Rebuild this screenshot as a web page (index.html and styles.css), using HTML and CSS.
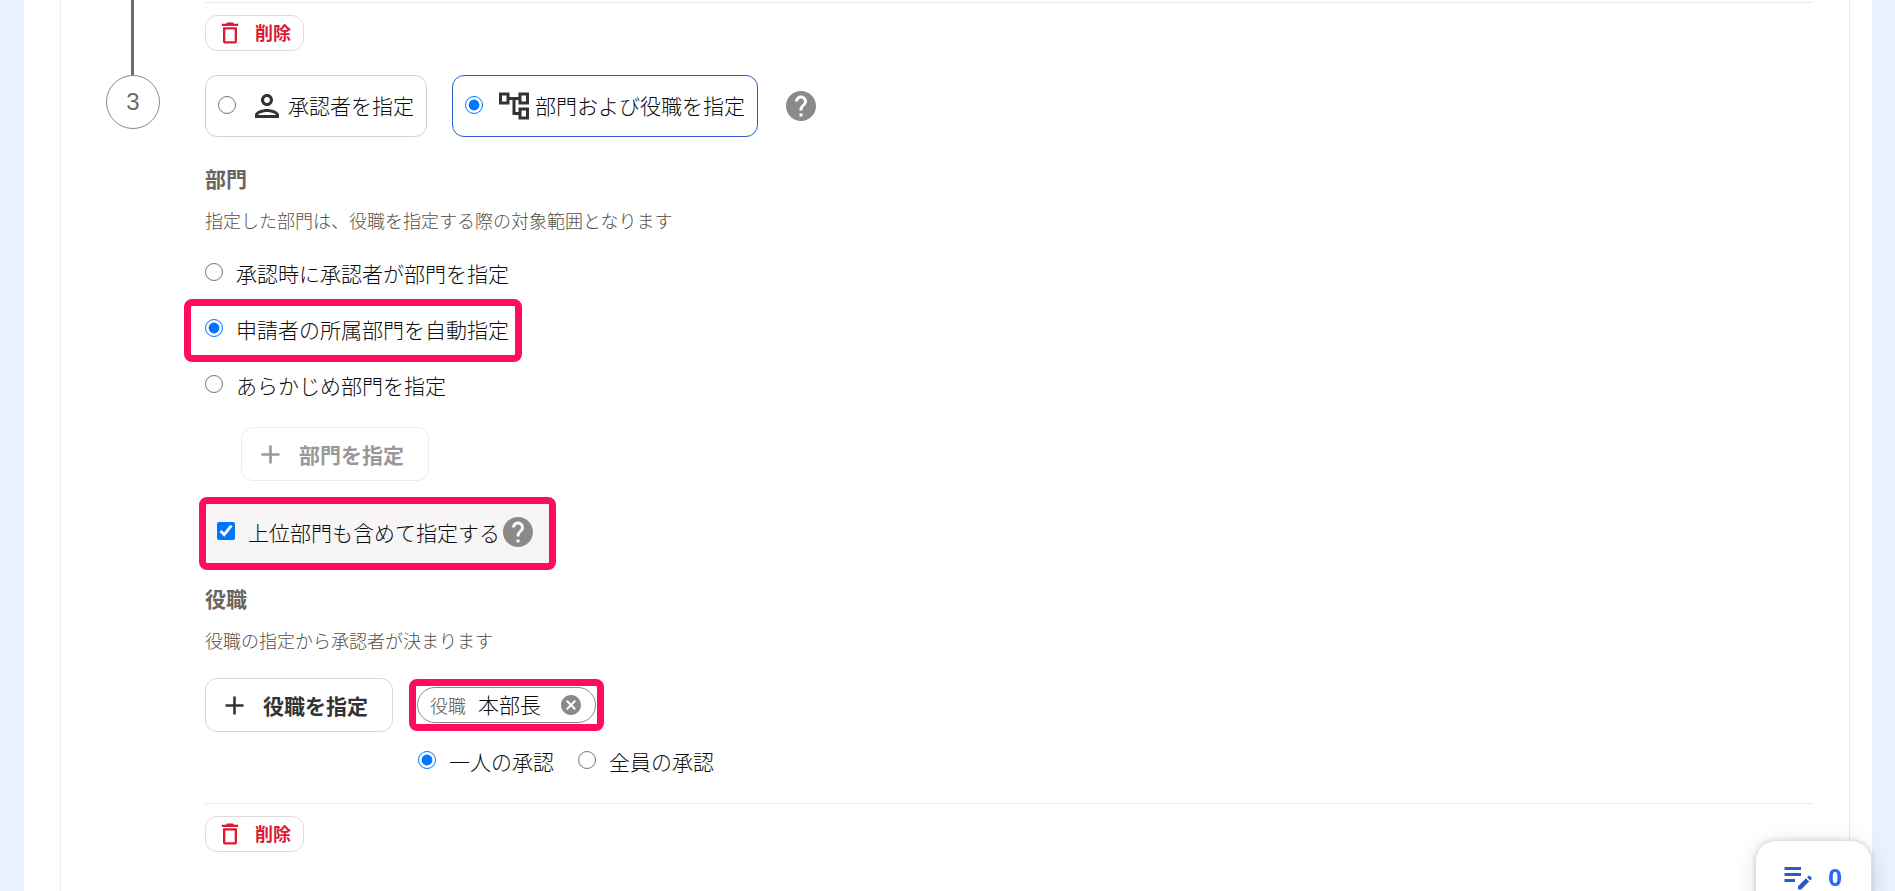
FILE: index.html
```
<!DOCTYPE html>
<html lang="ja">
<head>
    <meta charset="UTF-8">
    <title>承認経路の設定</title>
    <link rel="stylesheet" href="styles.css">
</head>
<body>
    <!-- Shared icons -->
    <svg class="icon-defs" aria-hidden="true">
        <symbol id="icon-trash" viewBox="0 0 24 24">
            <path d="M6 19c0 1.100.9 2 2 2h8c1.100 0 2-.9 2-2V7H6v12zM8 9h8v10H8V9zm7.500-5l-1-1h-5l-1 1H5v2h14V4z"/>
        </symbol>
        <symbol id="icon-person" viewBox="0 0 24 24">
            <path d="M12 6c1.100 0 2 .9 2 2s-.9 2-2 2-2-.9-2-2 .9-2 2-2m0 10c2.700 0 5.800 1.290 6 2H6c.23-.72 3.310-2 6-2m0-12C9.790 4 8 5.790 8 8s1.790 4 4 4 4-1.790 4-4-1.790-4-4-4zm0 10c-2.670 0-8 1.340-8 4v2h16v-2c0-2.660-5.330-4-8-4z"/>
        </symbol>
        <symbol id="icon-tree" viewBox="0 0 24 24">
            <path d="M22 11V3h-7v3H9V3H2v8h7V8h2v10h4v3h7v-8h-7v3h-2V8h2v3h7zM7 9H4V5h3v4zm10 6h3v4h-3v-4zm0-10h3v4h-3V5z"/>
        </symbol>
        <symbol id="icon-help" viewBox="0 0 24 24">
            <path d="M12 2C6.480 2 2 6.480 2 12s4.480 10 10 10 10-4.480 10-10S17.520 2 12 2zm1 17h-2v-2h2v2zm2.070-7.750l-.9.920C13.450 12.900 13 13.500 13 15h-2v-.5c0-1.100.45-2.100 1.170-2.830l1.240-1.260c.37-.36.59-.86.59-1.410 0-1.100-.9-2-2-2s-2 .9-2 2H8c0-2.210 1.790-4 4-4s4 1.790 4 4c0 .88-.36 1.680-.93 2.250z"/>
        </symbol>
        <symbol id="icon-plus" viewBox="0 0 24 24">
            <path d="M19 13h-6v6h-2v-6H5v-2h6V5h2v6h6v2z"/>
        </symbol>
        <symbol id="icon-cancel" viewBox="0 0 24 24">
            <path d="M12 2C6.470 2 2 6.470 2 12s4.470 10 10 10 10-4.470 10-10S17.530 2 12 2zm5 13.590L15.590 17 12 13.410 8.410 17 7 15.590 10.590 12 7 8.410 8.410 7 12 10.590 15.590 7 17 8.410 13.410 12 17 15.590z"/>
        </symbol>
        <symbol id="icon-edit-note" viewBox="0 0 24 24">
            <path d="M3 10h11v2H3v-2zm0-2h11V6H3v2zm0 8h7v-2H3v2zm15.010-3.130l.71-.71c.39-.39 1.020-.39 1.410 0l.71.710c.39.39.39 1.020 0 1.410l-.71.710-2.120-2.120zm-.71.710l-5.300 5.300V21h2.120l5.300-5.300-2.120-2.120z"/>
        </symbol>
    </svg>

    <main class="page">
        <ol class="steps">
            <li class="step step-previous">
                <div class="rail">
                    <span class="rail-line"></span>
                </div>
                <div class="step-body">
                    <div class="step-footer">
                        <button type="button" class="btn-delete"><svg class="icon-delete"><use href="#icon-trash"/></svg>削除</button>
                    </div>
                </div>
            </li>

            <li class="step">
                <div class="rail">
                    <span class="step-number">3</span>
                </div>
                <div class="step-body">
                    <!-- How the approver is chosen -->
                    <div class="method-row">
                        <label class="method-card">
                            <input type="radio" name="method">
                            <svg class="icon-large"><use href="#icon-person"/></svg>
                            <span>承認者を指定</span>
                        </label>
                        <label class="method-card selected">
                            <input type="radio" name="method" checked>
                            <svg class="icon-large"><use href="#icon-tree"/></svg>
                            <span>部門および役職を指定</span>
                        </label>
                        <button type="button" class="btn-help" aria-label="ヘルプ"><svg class="icon-large"><use href="#icon-help"/></svg></button>
                    </div>

                    <!-- Department -->
                    <h2>部門</h2>
                    <p class="description">指定した部門は、役職を指定する際の対象範囲となります</p>
                    <div class="department-options">
                        <label class="option"><input type="radio" name="department"><span>承認時に承認者が部門を指定</span></label>
                        <label class="option highlight highlight-option"><input type="radio" name="department" checked><span>申請者の所属部門を自動指定</span></label>
                        <label class="option"><input type="radio" name="department"><span>あらかじめ部門を指定</span></label>
                    </div>
                    <button type="button" class="btn-add btn-department" disabled><svg class="icon-plus"><use href="#icon-plus"/></svg>部門を指定</button>
                    <div class="include-parent highlight">
                        <label class="option"><input type="checkbox" checked><span>上位部門も含めて指定する</span></label>
                        <button type="button" class="btn-help" aria-label="ヘルプ"><svg class="icon-large"><use href="#icon-help"/></svg></button>
                    </div>

                    <!-- Position -->
                    <h2>役職</h2>
                    <p class="description">役職の指定から承認者が決まります</p>
                    <div class="position-row">
                        <button type="button" class="btn-add"><svg class="icon-plus"><use href="#icon-plus"/></svg>役職を指定</button>
                        <div class="position-detail">
                            <div class="chip-frame highlight">
                                <div class="chip">
                                    <span class="chip-type">役職</span>
                                    <span class="chip-name">本部長</span>
                                    <button type="button" class="btn-remove" aria-label="本部長を外す"><svg class="icon-cancel"><use href="#icon-cancel"/></svg></button>
                                </div>
                            </div>
                            <div class="approval-options">
                                <label class="option"><input type="radio" name="approval" checked><span>一人の承認</span></label>
                                <label class="option"><input type="radio" name="approval"><span>全員の承認</span></label>
                            </div>
                        </div>
                    </div>

                    <div class="step-footer">
                        <button type="button" class="btn-delete"><svg class="icon-delete"><use href="#icon-trash"/></svg>削除</button>
                    </div>
                </div>
            </li>
        </ol>
    </main>

    <button type="button" class="draft-button" aria-label="下書き 0件"><svg class="icon-note"><use href="#icon-edit-note"/></svg><span>0</span></button>
</body>
</html>
```
FILE: styles.css
```
/* General Styles */
* {
    box-sizing: border-box;
}

body {
    font-family: "Noto Sans CJK JP", sans-serif;
    font-size: 21px;
    font-weight: 300;
    line-height: 32px;
    color: #0c0c0c;
    background-color: #eaf1fe;
    margin: 0;
    padding: 0 23px 0 24px;
}

h2, p, ol {
    margin: 0;
    padding: 0;
}

h2 {
    font-size: 21px;
    font-weight: 700;
    line-height: 30px;
    color: #6b655e;
}

svg {
    display: block;
    flex: none;
    fill: currentColor;
}

button {
    display: flex;
    align-items: center;
    font-family: inherit;
    font-weight: 700;
    color: #333;
    background: none;
    border: 0;
    padding: 0;
}

input {
    flex: none;
    width: 18px;
    height: 18px;
    margin: 0 0 2px;
    accent-color: #0075ff;
}

/* Page Layout */
.page {
    min-height: 100vh;
    padding: 0 22px 0 36px;
    background-color: #fff;
}

.steps {
    min-height: 100vh;
    padding: 0 36px 0 45px;
    border: solid #ebebeb;
    border-width: 0 1px;
    list-style: none;
}

.step {
    display: flex;
    gap: 45px;
}

.step-previous {
    padding-top: 2px;
}

.step-previous .step-body {
    padding-bottom: 24px;
}

.step-body {
    flex: 1;
}

/* Step Rail */
.rail {
    display: flex;
    flex: none;
    justify-content: center;
    width: 54px;
}

.rail-line {
    width: 3px;
    margin: -2px 1px 0 0;
    background-color: #6b6b6b;
}

.step-number {
    display: flex;
    align-items: center;
    justify-content: center;
    width: 54px;
    height: 54px;
    border: 1px solid #8a8a8a;
    border-radius: 50%;
    font-family: "Liberation Sans", Arial, sans-serif;
    font-size: 24px;
    font-weight: 400;
    color: #6b6b6b;
}

.step-footer {
    padding-top: 12px;
    border-top: 1px solid #ebebeb;
}

/* Method Cards */
.method-row {
    display: flex;
    align-items: center;
    gap: 25px;
    margin-bottom: 26px;
}

.method-card {
    display: flex;
    align-items: center;
    height: 62px;
    padding: 0 12px;
    border: 1px solid #d0d0d0;
    border-radius: 12px;
}

.method-card.selected {
    border-color: #2a5bc7;
}

.method-card .icon-large {
    margin: 0 3px 0 13px;
    color: #333;
}

.method-card span {
    padding-bottom: 2px;
}

/* Icons */
.icon-defs {
    display: none;
}

.icon-large {
    width: 36px;
    height: 36px;
}

.icon-cancel {
    width: 24px;
    height: 24px;
}

.icon-delete {
    width: 28px;
    height: 28px;
}

.icon-plus {
    width: 31px;
    height: 31px;
}

.icon-note {
    width: 36px;
    height: 36px;
}

/* Buttons */
.btn-help {
    color: #8b8a88;
}

.btn-delete {
    gap: 11px;
    height: 36px;
    padding: 0 12px 1px 10px;
    border: 1px solid #dcdcdc;
    border-radius: 12px;
    font-size: 18px;
    line-height: 27px;
    color: #dc1a32;
}

.btn-add {
    gap: 13px;
    height: 54px;
    padding: 0 24px 0 13px;
    border: 1px solid #d8d8d8;
    border-radius: 12px;
    font-size: 21px;
    white-space: nowrap;
}

.btn-add:disabled {
    opacity: 0.5;
}

/* Options */
.description {
    margin: 14px 0 23px;
    font-size: 18px;
    line-height: 27px;
    color: #544e46;
}

.department-options {
    display: flex;
    flex-direction: column;
    align-items: flex-start;
    gap: 24px;
    margin-bottom: 26px;
}

.option {
    display: flex;
    align-items: center;
    gap: 13px;
}

.btn-department {
    margin: 0 0 16px 36px;
}

/* Highlight frames */
.highlight {
    border: 7px solid #ff0d5b;
    border-radius: 8px;
}

.highlight-option {
    margin: -14px -21px -17px;
    padding: 7px 6px 10px 14px;
}

.include-parent {
    display: flex;
    align-items: center;
    width: fit-content;
    height: 73px;
    margin: 0 0 13px -6px;
    padding: 0 13px 4px 11px;
    background-color: #f7f5f6;
}

/* Position */
.position-row {
    display: flex;
    gap: 16px;
    margin-top: 24px;
    margin-bottom: 26px;
}

.position-detail {
    padding-top: 1px;
}

.chip-frame {
    width: fit-content;
    padding: 1px;
}

.chip {
    display: flex;
    align-items: center;
    height: 36px;
    padding: 0 12px;
    border: 1px solid #8b8a88;
    border-radius: 18px;
}

.chip-type {
    margin-right: 12px;
    font-size: 18px;
    color: #544e46;
}

.chip-name {
    margin-right: 18px;
    padding-bottom: 2px;
}

.btn-remove {
    color: #8b8a88;
}

.approval-options {
    display: flex;
    gap: 24px;
    margin: 14px 0 0 9px;
}

/* Draft Button */
.draft-button {
    position: fixed;
    right: 24px;
    bottom: -22px;
    justify-content: center;
    gap: 12px;
    width: 115px;
    height: 72px;
    padding: 0 5px 2px 0;
    border-radius: 20px;
    background-color: #fff;
    box-shadow: 0 0 6px rgba(0, 0, 0, 0.2), 0 4px 24px rgba(0, 0, 0, 0.12);
    font-family: "Noto Sans", sans-serif;
    font-size: 24px;
    color: #2a5bc7;
}

.draft-button span {
    color: #2d68f5;
}
```
